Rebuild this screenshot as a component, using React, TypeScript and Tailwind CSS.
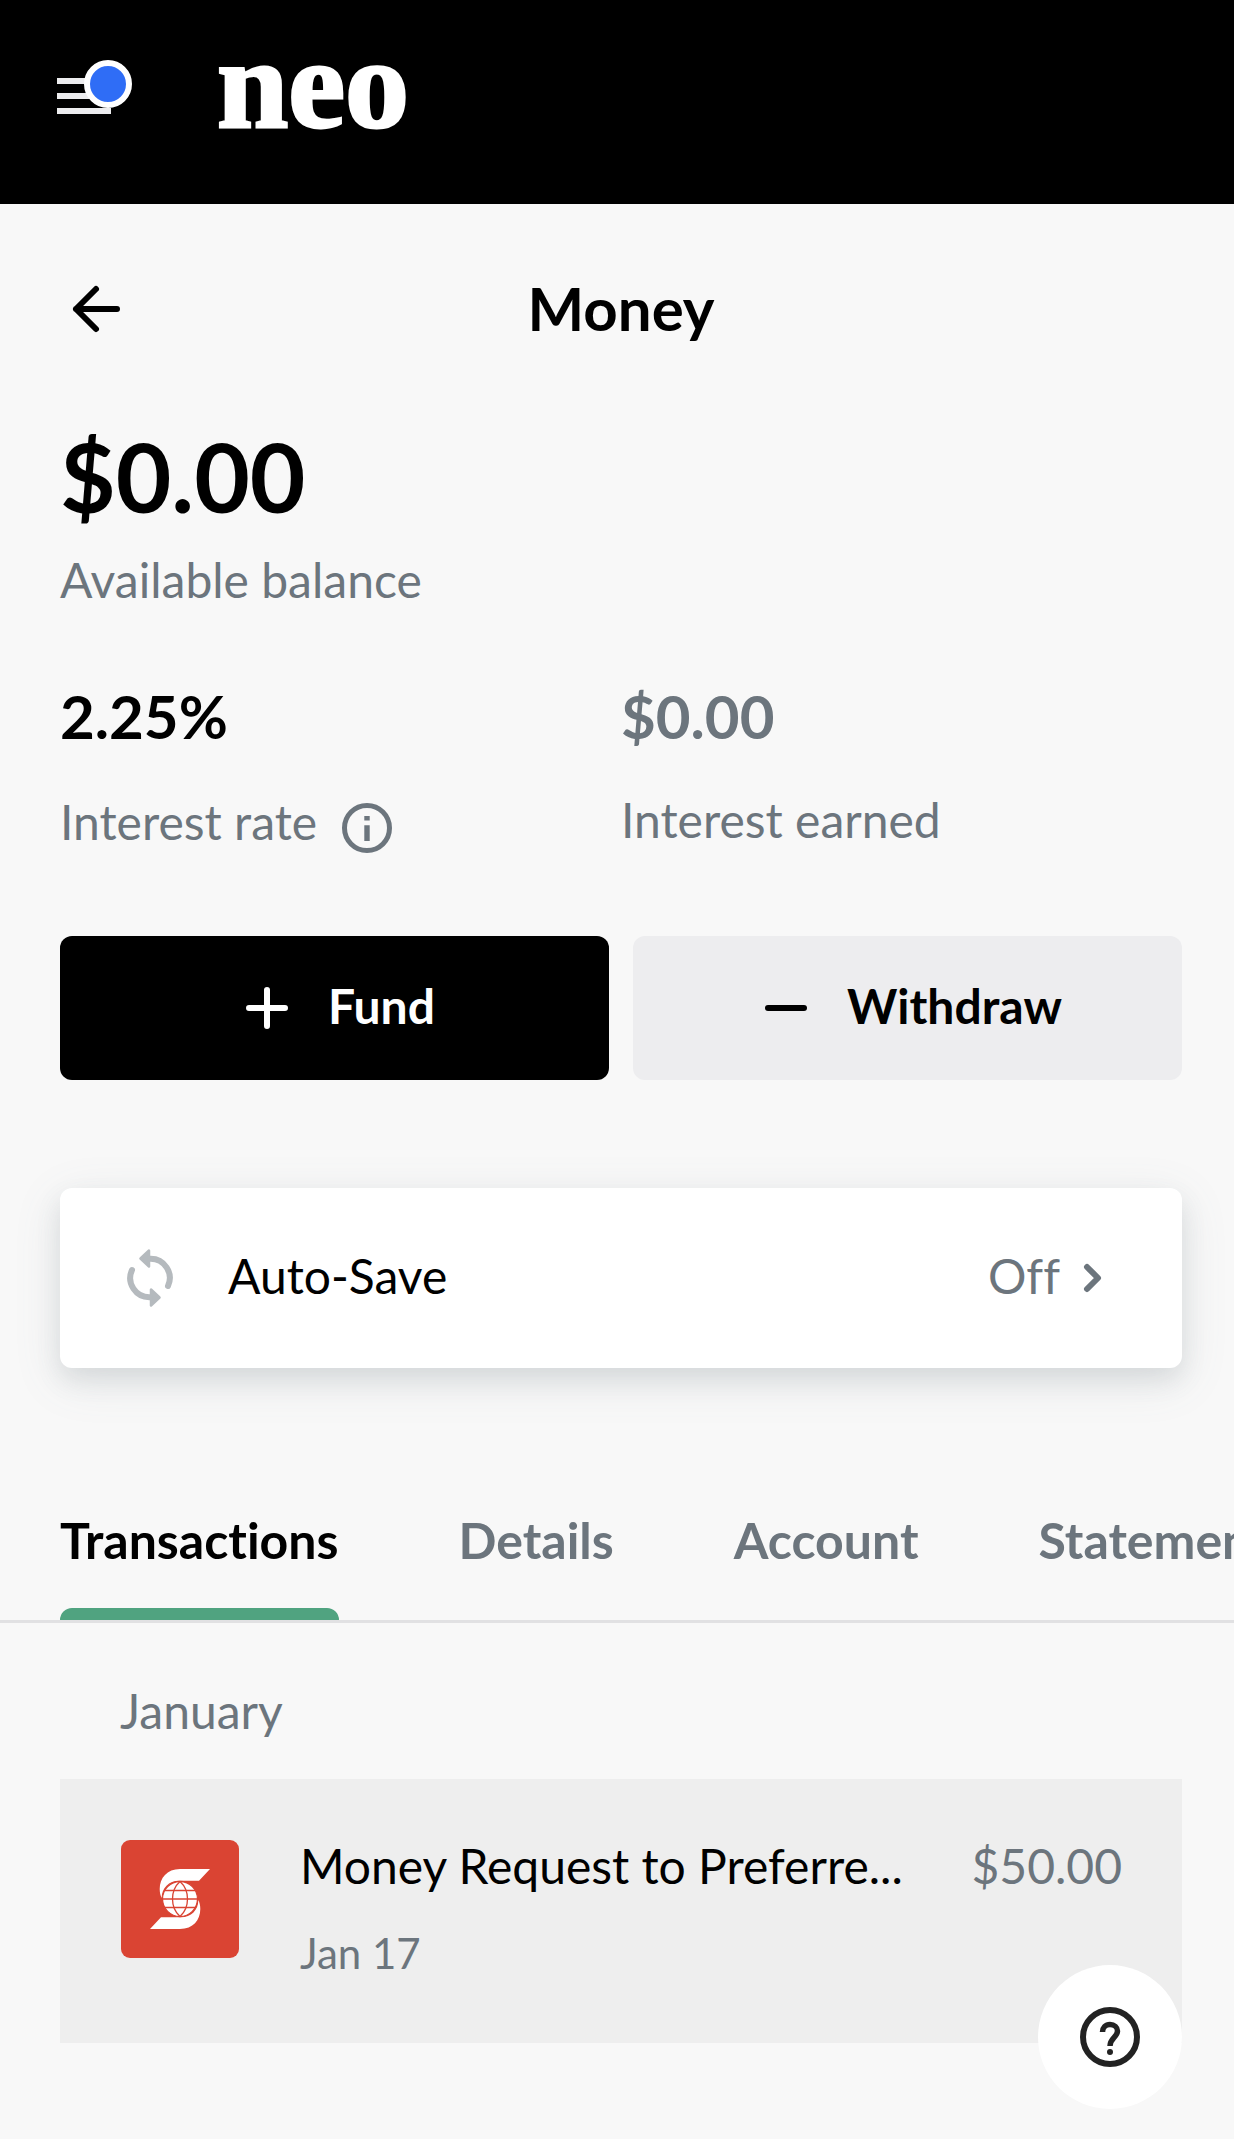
import { useState } from "react";

const TABS = ["Transactions", "Details", "Account", "Statements"] as const;

type Tab = (typeof TABS)[number];

function MenuIcon() {
  return (
    <svg viewBox="0 0 54 36" className="h-9 w-[54px] fill-[#ededef]" aria-hidden="true">
      <rect width="54" height="6" />
      <rect y="15" width="54" height="6" />
      <rect y="30" width="54" height="6" />
    </svg>
  );
}

function BackIcon() {
  return (
    <svg
      viewBox="0 0 72 72"
      className="size-[72px] fill-none stroke-black stroke-6"
      strokeLinecap="round"
      strokeLinejoin="round"
      aria-hidden="true"
    >
      <path d="M57 37H16M36 17L16 37l20 20" />
    </svg>
  );
}

function InfoIcon() {
  return (
    <svg viewBox="0 0 64 64" className="size-16 text-[#6c757d]" aria-hidden="true">
      <circle cx="32" cy="32" r="22.5" fill="none" stroke="currentColor" strokeWidth="5" />
      <path d="M29.300 20h5.400v4.500h-5.400zM29.300 29.300h5.400V45h-5.400z" fill="currentColor" />
    </svg>
  );
}

function SyncIcon() {
  return (
    <svg
      viewBox="0 0 64 64"
      className="size-16 fill-none stroke-[#b5babe]"
      strokeLinecap="round"
      strokeLinejoin="round"
      aria-hidden="true"
    >
      <path d="M32 12.800A19.200 19.200 0 0 1 50 40M32 51.200A19.200 19.200 0 0 1 14 24" strokeWidth="6" />
      <path d="M22.500 12.500L31 4.500v16zM41.500 51.500L33 43.500v16z" strokeWidth="2.500" className="fill-[#b5babe]" />
    </svg>
  );
}

function ScotiabankLogo() {
  return (
    <svg viewBox="0 0 120 120" className="size-[120px] shrink-0" role="img" aria-label="Scotiabank">
      <rect x="1" y="1" width="118" height="118" rx="9" fill="#da4433" />
      <path d="M90 30H60C47 30 39.700 39 39.700 50c0 3.500.7 6.500 2 9C41.500 49 49 41.700 59 41.700h20z" fill="#fff" />
      <path d="M30 90h30c13 0 20.300-9 20.300-20 0-3.500-.7-6.500-2-9C78.500 71 71 78.300 61 78.300H41z" fill="#fff" />
      <circle cx="60" cy="60" r="17.500" fill="#fff" stroke="#da4433" strokeWidth="1.300" />
      <g fill="none" stroke="#da4433" strokeWidth="1.300">
        <path d="M45 51.500h30M42.500 60h35M45 68.500h30" />
        <path d="M60 42.500c-10 9-10 26 0 35M60 42.500c10 9 10 26 0 35" />
      </g>
    </svg>
  );
}

export default function App() {
  const [tab, setTab] = useState<Tab>("Transactions");

  return (
    <div className="min-h-screen overflow-x-hidden bg-[#f8f8f8] font-['Lato',sans-serif] text-5xl text-black [font-variant-ligatures:none]">
      <header className="flex h-[204px] items-center gap-[106px] bg-black pl-[57px] pb-3">
        <button type="button" aria-label="Open menu" className="relative">
          <MenuIcon />
          <span className="absolute -top-[18px] left-[27px] size-12 rounded-full border-6 border-white bg-[#2f6df6]" />
        </button>
        <a
          href="#"
          className="pb-6 font-['Liberation_Serif',serif] text-[128px] leading-[128px] font-bold text-white [-webkit-text-stroke:3px_white]"
        >
          neo
        </a>
      </header>

      <main>
        <div className="pr-[52px] pl-[60px]">
          <div className="grid grid-cols-[72px_1fr_72px] items-center pt-[68px]">
            <button type="button" aria-label="Back">
              <BackIcon />
            </button>
            <h1 className="text-center text-[60px] leading-[72px] font-bold">Money</h1>
          </div>

          <p className="mt-[78px] text-[96px] leading-[108px] font-bold">$0.00</p>
          <p className="mt-[14px] leading-[72px] text-[#6c757d]">Available balance</p>

          <div className="mt-[58px] grid grid-cols-2">
            <div>
              <p className="text-[60px] leading-[84px] font-bold">2.25%</p>
              <div className="mt-6 flex items-end gap-[18px] text-[#6c757d]">
                <span className="leading-[80px]">Interest rate</span>
                <button type="button" aria-label="About the interest rate" className="pb-0.5">
                  <InfoIcon />
                </button>
              </div>
            </div>
            <div className="text-[#6c757d]">
              <p className="text-[60px] leading-[84px] font-bold">$0.00</p>
              <p className="mt-6 leading-[76px]">Interest earned</p>
            </div>
          </div>

          <div className="mt-[74px] grid grid-cols-2 gap-6 font-bold">
            <button
              type="button"
              className="flex h-36 items-center justify-center gap-10 rounded-xl bg-black pl-3 text-white"
            >
              <svg viewBox="0 0 42 42" className="size-[42px] stroke-white stroke-6" strokeLinecap="round" aria-hidden="true">
                <path d="M3 21h36M21 3v36" />
              </svg>
              <span className="pb-1">Fund</span>
            </button>
            <button type="button" className="flex h-36 items-center justify-center gap-10 rounded-xl bg-[#ededef] pl-3">
              <svg viewBox="0 0 42 42" className="size-[42px] stroke-black stroke-6" strokeLinecap="round" aria-hidden="true">
                <path d="M3 21h36" />
              </svg>
              <span className="pb-1">Withdraw</span>
            </button>
          </div>

          <button
            type="button"
            className="mt-[108px] flex h-[180px] w-full items-center rounded-xl bg-white px-[58px] shadow-[0_12px_48px_rgba(108,117,125,0.14),0_12px_24px_rgba(108,117,125,0.14)]"
          >
            <SyncIcon />
            <span className="ml-[46px] pb-1">Auto-Save</span>
            <span className="ml-auto pb-1 text-[#6c757d]">Off</span>
            <svg
              viewBox="0 0 64 64"
              className="size-16 fill-none stroke-[#6c757d] stroke-6"
              strokeLinecap="round"
              strokeLinejoin="round"
              aria-hidden="true"
            >
              <path d="M27 21l11 11-11 11" />
            </svg>
          </button>
        </div>

        <div
          role="tablist"
          className="mt-[136px] flex gap-[120px] overflow-hidden border-b-3 border-[#e1e1e3] pl-[60px] text-[50px] font-bold"
        >
          {TABS.map((name) => (
            <button
              key={name}
              type="button"
              role="tab"
              aria-selected={tab === name}
              onClick={() => setTab(name)}
              className={`shrink-0 ${tab === name ? "text-black" : "text-[#6c757d]"}`}
            >
              <span className="block leading-[72px]">{name}</span>
              <span className={`mt-8 block h-3 rounded-t-xl ${tab === name ? "bg-[#50a380]" : ""}`} />
            </button>
          ))}
        </div>

        <section className="pr-[52px] pb-24 pl-[60px]">
          <h2 className="mt-[52px] pl-[60px] leading-[72px] text-[#6c757d]">January</h2>
          <ul className="mt-8">
            <li className="flex gap-[60px] bg-[#eeeeee] p-[60px]">
              <ScotiabankLogo />
              <div className="min-w-0 flex-1">
                <p className="leading-[54px] whitespace-nowrap">Money Request to Preferre...</p>
                <p className="mt-[30px] text-[42px] leading-[60px] text-[#6c757d]">Jan 17</p>
              </div>
              <p className="leading-[54px] text-[#6c757d]">$50.00</p>
            </li>
          </ul>
        </section>
      </main>

      <button
        type="button"
        aria-label="Help"
        className="fixed right-[52px] bottom-[30px] flex size-36 items-center justify-center rounded-full bg-white"
      >
        <svg viewBox="0 0 60 60" className="size-[60px] fill-none stroke-[#222]" aria-hidden="true">
          <circle cx="30" cy="30" r="27" strokeWidth="6" />
          <path d="M22.500 25c0-4 3-7.500 7.500-7.500s7.500 3 7.500 6.500c0 6-7.500 7-7.500 15" strokeWidth="5.500" />
          <circle cx="30" cy="45" r="3" fill="#222" stroke="none" />
        </svg>
      </button>
    </div>
  );
}
